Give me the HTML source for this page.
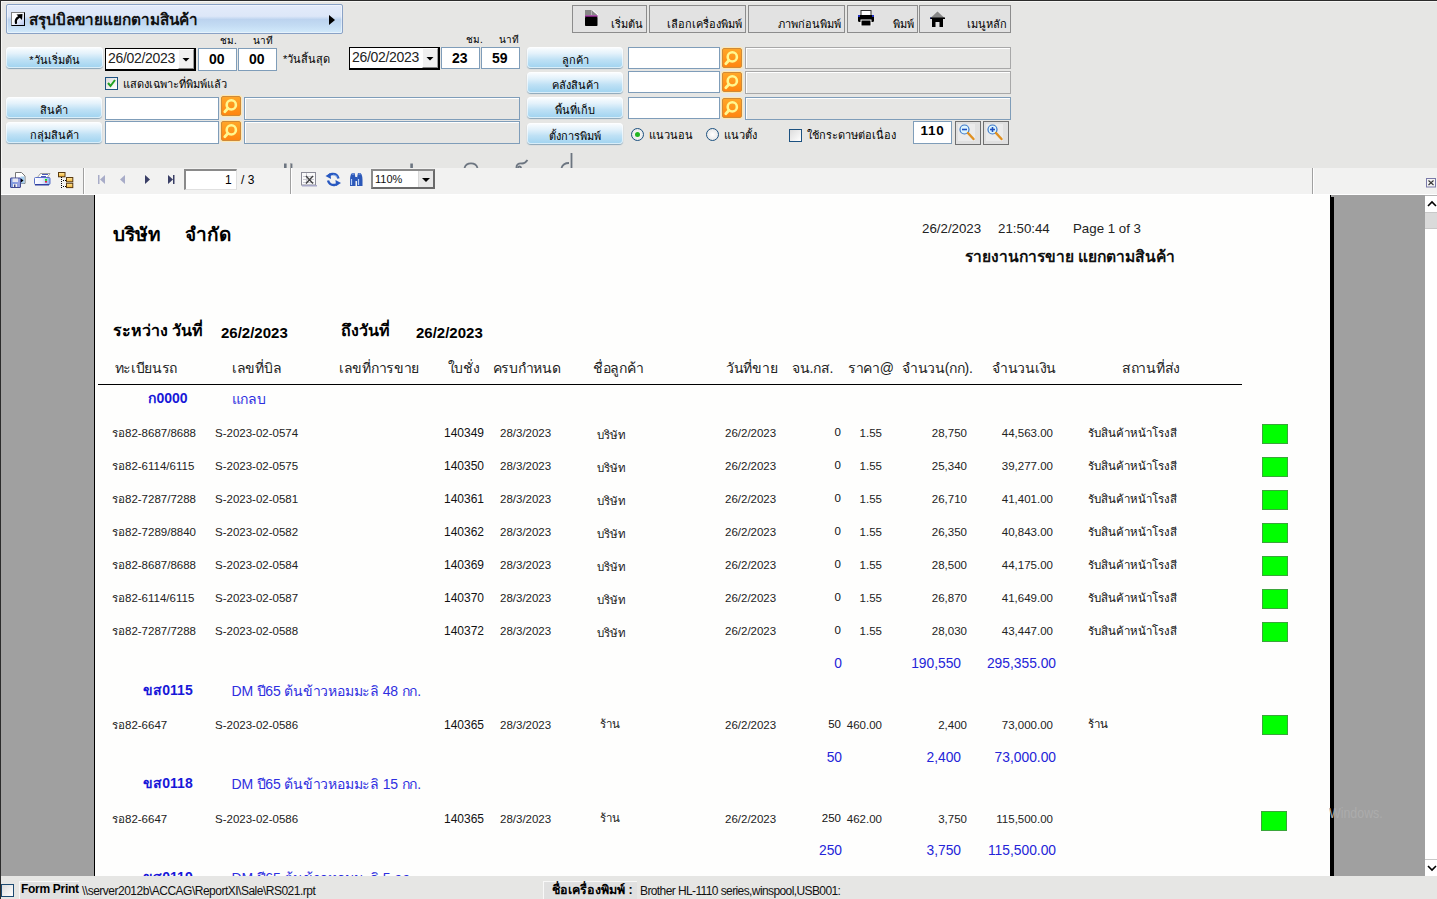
<!DOCTYPE html><html><head><meta charset="utf-8"><style>
*{margin:0;padding:0;box-sizing:border-box}
html,body{width:1437px;height:899px;overflow:hidden;background:#e6e6e4;font-family:"Liberation Sans",sans-serif;color:#000}
.a{position:absolute}
.t{position:absolute;white-space:nowrap;line-height:1}
.btn{position:absolute;border-radius:4px;background:linear-gradient(#fdfeff 0%,#e4f2fb 30%,#bfe1f5 60%,#9fd3f0 100%);box-shadow:0 1px 1px #8aa6b8, inset 0 0 0 1px rgba(255,255,255,.6)}
.btn span{position:absolute;left:0;right:0;text-align:center;font-size:11px;line-height:1;white-space:nowrap}
.inp{position:absolute;background:#fff;border:1px solid #7f9db9}
.dis{position:absolute;background:#e6e6e4;border:1px solid #a8a8a8;box-shadow:inset 1px 1px 0 #fff}
.srch{position:absolute;width:20px;height:20px;border-radius:2px;border:1px solid #d08a38;box-shadow:0 0 0 1px #ffe8b0;background:linear-gradient(#ffa628,#ff8610)}
.tb{position:absolute;top:5px;height:28px;border:1px solid #8c8c8c;background:#e2e2e2}
.r{text-align:right}
.blue{color:#2424d8}
</style></head><body>
<div class="a" style="left:0;top:0;width:1437px;height:1px;background:#2b2b2b"></div>
<div class="a" style="left:0;top:0;width:1px;height:899px;background:#2b2b2b"></div>
<div class="a" style="left:1px;top:1px;width:1436px;height:1px;background:#f6f6f4"></div><div class="a" style="left:1px;top:1px;width:1px;height:167px;background:#f6f6f4"></div>
<div class="a" style="left:6px;top:4px;width:337px;height:30px;border:1px solid #8aa2c6;border-radius:2px;box-shadow:inset 0 0 0 1px rgba(255,255,255,.45);background:linear-gradient(#e3ebfa 0%,#dde7f8 40%,#bcd3ef 52%,#c3dbf3 72%,#d2eafb 100%)"></div>
<div class="a" style="left:11px;top:12px;width:14px;height:14px;border-top:1px solid #808080;border-left:1px solid #808080;border-right:1px solid #000;border-bottom:1px solid #000;background:linear-gradient(135deg,#fff 35%,#b8c8f0)"><svg width="12" height="12" style="position:absolute;left:0;top:0"><path d="M4 10 Q3 6 7 4" stroke="#000" stroke-width="2.2" fill="none" stroke-linecap="round"/><path d="M4.5 1.5 L10.5 1 L10 7 Z" fill="#000"/></svg></div>
<div class="t" style="left:28.5px;top:12px;font-size:15.3px;font-weight:bold;color:#111">สรุปบิลขายแยกตามสินค้า</div>
<svg class="a" style="left:329px;top:15px" width="6" height="10"><path d="M0 0 L6 5 L0 10 Z" fill="#000"/></svg>
<div class="tb" style="left:572px;width:75px"><div class="t" style="right:3px;top:13px;font-size:11px">เริ่มต้น</div></div>
<div class="tb" style="left:649px;width:97px"><div class="t" style="right:3px;top:13px;font-size:11px">เลือกเครื่องพิมพ์</div></div>
<div class="tb" style="left:748px;width:97px"><div class="t" style="right:3px;top:13px;font-size:11px">ภาพก่อนพิมพ์</div></div>
<div class="tb" style="left:847px;width:71px"><div class="t" style="right:3px;top:13px;font-size:11px">พิมพ์</div></div>
<div class="tb" style="left:919px;width:92px"><div class="t" style="right:3px;top:13px;font-size:11px">เมนูหลัก</div></div>
<svg class="a" style="left:585px;top:10px" width="14" height="16"><defs><linearGradient id="pu" x1="0" y1="0" x2="0" y2="1"><stop offset="0" stop-color="#c070c0"/><stop offset="1" stop-color="#500050"/></linearGradient></defs><rect x="0" y="0" width="6.5" height="5" fill="#888"/><path d="M7 0.5 L12.5 5 H7 Z" fill="#888"/><path d="M7.5 0 L13 5" stroke="#fff" stroke-width="1"/><rect x="0" y="5" width="12.5" height="2.2" fill="url(#pu)"/><rect x="0" y="7" width="12.5" height="9" rx="0.8" fill="#000"/></svg>
<svg class="a" style="left:858px;top:10px" width="16" height="16"><rect x="3" y="0.5" width="10" height="5" fill="#fff" stroke="#333" stroke-width="1"/><rect x="0" y="5" width="16" height="7" rx="1.5" fill="#000"/><rect x="0" y="5" width="2" height="2" fill="#2030c0"/><rect x="14" y="5" width="2" height="2" fill="#2030c0"/><rect x="3" y="10" width="10" height="6" fill="#000" stroke="#fff" stroke-width="1"/></svg>
<svg class="a" style="left:930px;top:11px" width="16" height="16"><path d="M0.5 7 L7.5 0.5 L14.5 7 Z" fill="#888"/><rect x="0" y="6.5" width="15" height="1.5" fill="#000"/><rect x="0" y="6.5" width="1" height="1" fill="#3040c0"/><path d="M2 8 H13 V16 H9.5 V11 H5.5 V16 H2 Z" fill="#000"/></svg>
<div class="btn" style="left:6px;top:47px;width:97px;height:21px"><span style="top:7.5px">*วันเริ่มต้น</span></div>
<div class="a" style="left:105px;top:48px;width:91px;height:23px;background:#fff;border-top:1px solid #000;border-left:1px solid #000;border-right:2px solid #000;border-bottom:2px solid #000"><div class="t" style="left:2px;top:1.5px;font-size:14px;letter-spacing:-0.3px;color:#222">26/02/2023</div><div class="a" style="left:72px;top:0px;width:16px;height:20px;background:#f0f0f0;border-left:1px solid #fff;border-top:1px solid #fff;border-right:1px solid #a0a0a0;border-bottom:1px solid #808080"><svg width="16" height="18" style="position:absolute;left:-1px;top:-1px"><path d="M4.5 9 H11.5 L8 12.5 Z" fill="#000"/></svg></div></div>
<div class="inp" style="left:198px;top:48px;width:39px;height:23px"></div><div class="t" style="left:209px;top:51.5px;font-size:14px;font-weight:bold">00</div>
<div class="inp" style="left:238px;top:48px;width:39px;height:23px"></div><div class="t" style="left:249px;top:51.5px;font-size:14px;font-weight:bold">00</div>
<div class="t" style="left:220px;top:36px;font-size:10px">ชม.</div>
<div class="t" style="left:253px;top:36px;font-size:10px">นาที</div>
<div class="t" style="left:283px;top:54px;font-size:11px">*วันสิ้นสุด</div>
<div class="a" style="left:349px;top:47px;width:91px;height:23px;background:#fff;border-top:1px solid #000;border-left:1px solid #000;border-right:2px solid #000;border-bottom:2px solid #000"><div class="t" style="left:2px;top:1.5px;font-size:14px;letter-spacing:-0.3px;color:#222">26/02/2023</div><div class="a" style="left:72px;top:0px;width:16px;height:20px;background:#f0f0f0;border-left:1px solid #fff;border-top:1px solid #fff;border-right:1px solid #a0a0a0;border-bottom:1px solid #808080"><svg width="16" height="18" style="position:absolute;left:-1px;top:-1px"><path d="M4.5 9 H11.5 L8 12.5 Z" fill="#000"/></svg></div></div>
<div class="inp" style="left:441px;top:47px;width:39px;height:22px"></div><div class="t" style="left:452px;top:50.5px;font-size:14px;font-weight:bold">23</div>
<div class="inp" style="left:481px;top:47px;width:39px;height:22px"></div><div class="t" style="left:492px;top:50.5px;font-size:14px;font-weight:bold">59</div>
<div class="t" style="left:466px;top:35px;font-size:10px">ชม.</div>
<div class="t" style="left:499px;top:34.5px;font-size:10px">นาที</div>
<div class="a" style="left:105px;top:77px;width:13px;height:13px;border:1px solid #1c5180;background:linear-gradient(135deg,#dcdcdc,#fff)"><svg width="11" height="11" style="position:absolute;left:0;top:0"><path d="M2 5 L4.5 8 L9 2" stroke="#21a121" stroke-width="2" fill="none"/></svg></div>
<div class="t" style="left:123px;top:79px;font-size:11px">แสดงเฉพาะที่พิมพ์แล้ว</div>
<div class="btn" style="left:6px;top:97px;width:96px;height:21px"><span style="top:7.5px">สินค้า</span></div>
<div class="btn" style="left:6px;top:122px;width:96px;height:21px"><span style="top:7.5px">กลุ่มสินค้า</span></div>
<div class="inp" style="left:105px;top:97px;width:114px;height:23px"></div>
<div class="srch" style="left:221px;top:96px"><svg width="20" height="20" style="position:absolute;left:-1px;top:-1px"><circle cx="10.3" cy="8.9" r="4.6" stroke="#fff890" stroke-width="2.6" fill="none"/><path d="M7 12.3 L3.8 15.8" stroke="#fff890" stroke-width="2.8" stroke-linecap="round"/></svg></div>
<div class="dis" style="left:244px;top:97px;width:276px;height:23px;border-color:#7f9db9"></div>
<div class="inp" style="left:105px;top:121px;width:114px;height:23px"></div>
<div class="srch" style="left:221px;top:121px"><svg width="20" height="20" style="position:absolute;left:-1px;top:-1px"><circle cx="10.3" cy="8.9" r="4.6" stroke="#fff890" stroke-width="2.6" fill="none"/><path d="M7 12.3 L3.8 15.8" stroke="#fff890" stroke-width="2.8" stroke-linecap="round"/></svg></div>
<div class="dis" style="left:244px;top:121px;width:276px;height:23px;border-color:#7f9db9"></div>
<div class="btn" style="left:527px;top:47px;width:96px;height:21px"><span style="top:7.5px">ลูกค้า</span></div>
<div class="btn" style="left:527px;top:72px;width:96px;height:21px"><span style="top:7.5px">คลังสินค้า</span></div>
<div class="btn" style="left:527px;top:97px;width:96px;height:21px"><span style="top:7.5px">พื้นที่เก็บ</span></div>
<div class="btn" style="left:527px;top:123px;width:96px;height:21px"><span style="top:7.5px">ตั้งการพิมพ์</span></div>
<div class="inp" style="left:628px;top:47px;width:92px;height:22px"></div>
<div class="srch" style="left:722px;top:48px"><svg width="20" height="20" style="position:absolute;left:-1px;top:-1px"><circle cx="10.3" cy="8.9" r="4.6" stroke="#fff890" stroke-width="2.6" fill="none"/><path d="M7 12.3 L3.8 15.8" stroke="#fff890" stroke-width="2.8" stroke-linecap="round"/></svg></div>
<div class="inp" style="left:628px;top:71px;width:92px;height:22px"></div>
<div class="srch" style="left:722px;top:72px"><svg width="20" height="20" style="position:absolute;left:-1px;top:-1px"><circle cx="10.3" cy="8.9" r="4.6" stroke="#fff890" stroke-width="2.6" fill="none"/><path d="M7 12.3 L3.8 15.8" stroke="#fff890" stroke-width="2.8" stroke-linecap="round"/></svg></div>
<div class="inp" style="left:628px;top:97px;width:92px;height:22px"></div>
<div class="srch" style="left:722px;top:98px"><svg width="20" height="20" style="position:absolute;left:-1px;top:-1px"><circle cx="10.3" cy="8.9" r="4.6" stroke="#fff890" stroke-width="2.6" fill="none"/><path d="M7 12.3 L3.8 15.8" stroke="#fff890" stroke-width="2.8" stroke-linecap="round"/></svg></div>
<div class="dis" style="left:745px;top:47px;width:266px;height:22px"></div>
<div class="dis" style="left:745px;top:71px;width:266px;height:23px"></div>
<div class="dis" style="left:745px;top:97px;width:266px;height:23px;border-color:#7f9db9"></div>
<div class="a" style="left:631px;top:128px;width:13px;height:13px;border-radius:50%;border:1px solid #1c5180;background:radial-gradient(#fff,#e0e0e0)"><div class="a" style="left:3px;top:3px;width:5px;height:5px;border-radius:50%;background:#21b521"></div></div>
<div class="t" style="left:649px;top:130px;font-size:11px">แนวนอน</div>
<div class="a" style="left:706px;top:128px;width:13px;height:13px;border-radius:50%;border:1px solid #1c5180;background:radial-gradient(#fff,#e0e0e0)"></div>
<div class="t" style="left:724px;top:130px;font-size:11px">แนวตั้ง</div>
<div class="a" style="left:789px;top:129px;width:13px;height:13px;border:1px solid #1c5180;background:linear-gradient(135deg,#dcdcdc,#fff)"></div>
<div class="t" style="left:807px;top:130px;font-size:11px">ใช้กระดาษต่อเนื่อง</div>
<div class="inp" style="left:913px;top:121px;width:39px;height:23px"></div><div class="t" style="left:920.5px;top:124px;font-size:13.5px;letter-spacing:0.8px;font-weight:bold">110</div>
<div class="a" style="left:955px;top:121px;width:26px;height:24px;border:1px solid #707070;background:#e0e0e0"><svg width="24" height="22" style="position:absolute;left:0;top:0"><rect x="2" y="2" width="17" height="17" fill="#ebebeb"/><circle cx="8.5" cy="7.5" r="4.5" fill="#dcf4ff" stroke="#3c78c8" stroke-width="1.2"/><path d="M6 7.5 H11" stroke="#2050c0" stroke-width="1.6"/><path d="M12 11 L17.5 17" stroke="#e09020" stroke-width="2.4" stroke-linecap="round"/></svg></div>
<div class="a" style="left:983px;top:121px;width:26px;height:24px;border:1px solid #707070;background:#e0e0e0"><svg width="24" height="22" style="position:absolute;left:0;top:0"><rect x="2" y="2" width="17" height="17" fill="#ebebeb"/><circle cx="8.5" cy="7.5" r="4.5" fill="#dcf4ff" stroke="#3c78c8" stroke-width="1.2"/><path d="M6 7.5 H11" stroke="#2050c0" stroke-width="1.6"/><path d="M8.5 5 V10" stroke="#2050c0" stroke-width="1.6"/><path d="M12 11 L17.5 17" stroke="#e09020" stroke-width="2.4" stroke-linecap="round"/></svg></div>
<svg class="a" style="left:270px;top:150px" width="320" height="18"><g fill="#6c7580"><rect x="14" y="13.5" width="2.6" height="4.5"/><rect x="20" y="13.5" width="2.4" height="4.5"/><rect x="140.3" y="13.5" width="2.6" height="4.5"/></g><g stroke="#6c7580" stroke-width="1.8" fill="none"><path d="M194.5 18 A6.7 6 0 0 1 207.5 18"/><path d="M246.5 18 Q246 13 252 13.5 Q255 13.5 257.5 10"/><path d="M248 18 a1.5 1.5 0 0 1 3 0"/><path d="M291.5 18 Q293 13 299 13 M301.5 3 V18"/></g></svg>
<div class="a" style="left:1px;top:168px;width:1436px;height:27px;background:#f2f2f1"></div>
<div class="a" style="left:83px;top:168px;width:1px;height:27px;background:#a0a0a0"></div><div class="a" style="left:84px;top:168px;width:1px;height:27px;background:#fff"></div>
<div class="a" style="left:290px;top:164px;width:1px;height:31px;background:#a0a0a0"></div><div class="a" style="left:291px;top:168px;width:1px;height:27px;background:#fff"></div>
<div class="a" style="left:1312px;top:168px;width:1px;height:27px;background:#a0a0a0"></div><div class="a" style="left:1313px;top:168px;width:1px;height:27px;background:#fff"></div>
<svg class="a" style="left:0;top:166px" width="80" height="28"><defs><linearGradient id="fl" x1="0" y1="0" x2="1" y2="0"><stop offset="0" stop-color="#7c9ce0"/><stop offset="1" stop-color="#9aa0e0"/></linearGradient><linearGradient id="pb" x1="0" y1="0" x2="1" y2="0"><stop offset="0" stop-color="#ffffff"/><stop offset="0.5" stop-color="#e8ecff"/><stop offset="1" stop-color="#8ab0f0"/></linearGradient><linearGradient id="fd" x1="0" y1="0" x2="0" y2="1"><stop offset="0" stop-color="#ffe9a0"/><stop offset="1" stop-color="#f0b030"/></linearGradient></defs><path d="M15.5 6.5 H21.5 L25 10 V17.5 H15.5 Z" fill="#fff" stroke="#777" stroke-width="1"/><rect x="20.5" y="10.5" width="4" height="7" fill="#a8d0f0"/><path d="M21 12.5 L23.5 14.5 L21 16.5 Z" fill="#000"/><rect x="10.5" y="12" width="10" height="9.5" rx="0.5" fill="url(#fl)" stroke="#404890" stroke-width="1"/><rect x="12.5" y="12.5" width="5.5" height="3.5" fill="#e8e8f0"/><rect x="13" y="18" width="4" height="3" fill="#f0f0f0"/><rect x="14" y="18.5" width="1.5" height="2.5" fill="#404890"/><path d="M37 12 L40.5 7.5 H50 L47 12 Z" fill="#fff" stroke="#888" stroke-width="0.8"/><path d="M42 8.5 H48 M41 10.5 H46" stroke="#4a5ab8" stroke-width="1"/><rect x="34.5" y="11.5" width="15.5" height="7" rx="1" fill="url(#pb)" stroke="#5a70c8" stroke-width="1"/><rect x="35" y="18" width="14" height="1.5" fill="#3040a0"/><rect x="45" y="13" width="2" height="1.8" fill="#10e010"/><rect x="45" y="15" width="2" height="1.6" fill="#e02040"/><rect x="58.5" y="6.5" width="6.5" height="4.3" fill="url(#fd)" stroke="#5a3a10" stroke-width="1"/><rect x="66.5" y="11.5" width="6.3" height="4.3" fill="url(#fd)" stroke="#5a3a10" stroke-width="1"/><rect x="66.5" y="17.3" width="6.3" height="4.3" fill="url(#fd)" stroke="#5a3a10" stroke-width="1"/><rect x="61" y="11" width="1" height="1" fill="#000"/><rect x="61" y="13" width="1" height="1" fill="#000"/><rect x="61" y="15" width="1" height="1" fill="#000"/><rect x="61" y="17" width="1" height="1" fill="#000"/><rect x="61" y="19" width="1" height="1" fill="#000"/><rect x="61" y="21" width="1" height="1" fill="#000"/><rect x="63" y="14" width="1" height="1" fill="#000"/><rect x="65" y="14" width="1" height="1" fill="#000"/><rect x="63" y="20" width="1" height="1" fill="#000"/><rect x="65" y="20" width="1" height="1" fill="#000"/></svg>
<svg class="a" style="left:97px;top:175px" width="80" height="10"><rect x="1" y="0" width="1.5" height="9" fill="#a8acc8"/><path d="M8 0 L3 4.5 L8 9 Z" fill="#a8acc8"/><path d="M28 0 L23 4.5 L28 9 Z" fill="#a8acc8"/><path d="M48 0 L53 4.5 L48 9 Z" fill="#3a3f66"/><path d="M71 0 L76 4.5 L71 9 Z" fill="#3a3f66"/><rect x="76" y="0" width="1.5" height="9" fill="#3a3f66"/></svg>
<div class="a" style="left:184px;top:169px;width:53px;height:21px;background:#fff;border-top:2px solid #8a8a8a;border-left:2px solid #8a8a8a;border-right:1px solid #e0e0e0;border-bottom:1px solid #e0e0e0"></div>
<div class="t" style="left:225px;top:174px;font-size:12px">1</div>
<div class="t" style="left:241px;top:174px;font-size:12px">/ 3</div>
<svg class="a" style="left:301px;top:172px" width="16" height="15"><rect x="0.5" y="0.5" width="14" height="12.5" fill="#fafafa" stroke="#8c8c98"/><path d="M2 4.5 H13 M2 7.5 H13 M2 10.5 H13 M5.5 1 V13" stroke="#c8c8d0" stroke-width="1"/><path d="M5 4 L12 11.5 M12 4 L5 11.5" stroke="#404040" stroke-width="1.3"/><rect x="1" y="13" width="15" height="1.5" fill="#a8a8c8"/></svg>
<svg class="a" style="left:325px;top:172px" width="17" height="15"><path d="M13.5 6.5 Q12 1.5 7 2 Q4.5 2.3 3.5 4" stroke="#2858c0" stroke-width="2.4" fill="none"/><path d="M0.5 4 L5.5 1 L6 7 Z" fill="#2858c0"/><path d="M3 8.5 Q4.5 13.5 9.5 13 Q12 12.7 13 11" stroke="#2858c0" stroke-width="2.4" fill="none"/><path d="M16 11 L11 14 L10.5 8 Z" fill="#2858c0"/><path d="M12.5 5 Q11 3 8 3" stroke="#a8d0ff" stroke-width="0.8" fill="none"/></svg>
<svg class="a" style="left:349px;top:172px" width="15" height="15"><path d="M1 8 Q1 3 3 1 H5.5 Q6.5 4 6.5 8 V14 H1 Z" fill="#2c58b8"/><path d="M13.5 8 Q13.5 3 11.5 1 H9 Q8 4 8 8 V14 H13.5 Z" fill="#2c58b8"/><rect x="6" y="5" width="2.5" height="4" fill="#2c58b8"/><path d="M2.5 7 V13" stroke="#b8d0f8" stroke-width="1.2"/><path d="M9.5 7 V13" stroke="#b8d0f8" stroke-width="1.2"/><path d="M3 2 H5" stroke="#9ab8f0" stroke-width="1"/><path d="M9.5 2 H11.5" stroke="#9ab8f0" stroke-width="1"/></svg>
<div class="a" style="left:371px;top:169px;width:64px;height:20px;background:#fff;border-top:2px solid #8a8a8a;border-left:2px solid #8a8a8a;border-right:2px solid #6a6a6a;border-bottom:2px solid #6a6a6a"><div class="t" style="left:2px;top:3px;font-size:11px;color:#111">110%</div><div class="a" style="left:45px;top:0;width:15px;height:16px;background:#e8e8e8;border-left:1px solid #d8d8d8"><svg width="15" height="16" style="position:absolute;left:0;top:0"><path d="M3 7 H11 L7 11 Z" fill="#000"/></svg></div></div>
<svg class="a" style="left:1426px;top:178px" width="10" height="10"><rect x="0.5" y="0.5" width="9" height="8.5" fill="#f4f4f4" stroke="#7a7aa8"/><path d="M2.5 2.5 L7.5 7 M7.5 2.5 L2.5 7" stroke="#333" stroke-width="1.1"/></svg>
<div class="a" style="left:1px;top:195px;width:1424px;height:681px;background:#a0a0a0"></div>
<div class="a" style="left:94px;top:195px;width:1px;height:681px;background:#000"></div>
<div class="a" style="left:95px;top:195px;width:1235px;height:681px;background:#fefefd"></div>
<div class="a" style="left:1330px;top:195px;width:1px;height:681px;background:#000"></div><div class="a" style="left:1331px;top:197px;width:3px;height:679px;background:#000"></div>
<div class="a" style="left:1425px;top:195px;width:12px;height:681px;background:#fff;border-top:1px solid #b4b4b4"></div>
<div class="a" style="left:1px;top:194px;width:1436px;height:1px;background:#fff"></div>
<svg class="a" style="left:1427px;top:200px" width="10" height="8"><path d="M1 6 L5 2 L9 6" stroke="#000" stroke-width="1.6" fill="none"/></svg>
<div class="a" style="left:1425px;top:212px;width:12px;height:17px;background:#dadada;border-top:1px solid #c8c8c8;border-bottom:1px solid #c8c8c8"></div>
<div class="a" style="left:1425px;top:859px;width:12px;height:17px;background:#fff;border-top:1px solid #c8c8c8"></div>
<svg class="a" style="left:1427px;top:864px" width="10" height="8"><path d="M1 2 L5 6 L9 2" stroke="#000" stroke-width="1.6" fill="none"/></svg>
<div class="t" style="left:1329px;top:804.5px;font-size:15.5px;transform:scaleX(0.8);transform-origin:0 0;color:#acacac">Windows.</div>
<div class="t" style="left:113px;top:225px;font-size:19px;font-weight:bold;font-family:'Liberation Serif',serif">บริษัท</div>
<div class="t" style="left:185px;top:225px;font-size:19px;font-weight:bold;font-family:'Liberation Serif',serif">จำกัด</div>
<div class="t" style="left:922px;top:222px;font-size:13.3px;color:#222">26/2/2023</div>
<div class="t" style="left:998px;top:222px;font-size:13.3px;color:#222">21:50:44</div>
<div class="t" style="left:1073px;top:222px;font-size:13.3px;color:#222">Page 1 of 3</div>
<div class="t" style="left:965px;top:249px;font-size:15.6px;font-weight:bold;color:#111">รายงานการขาย แยกตามสินค้า</div>
<div class="t" style="left:113px;top:323px;font-size:16px;font-weight:bold">ระหว่าง วันที่</div>
<div class="t" style="left:221px;top:325px;font-size:15px;font-weight:bold">26/2/2023</div>
<div class="t" style="left:341px;top:323px;font-size:16px;font-weight:bold">ถึงวันที่</div>
<div class="t" style="left:416px;top:325px;font-size:15px;font-weight:bold">26/2/2023</div>
<div class="t" style="left:114.5px;top:361px;font-size:14px;letter-spacing:-0.3px;color:#222">ทะเบียนรถ</div>
<div class="t" style="left:232px;top:361px;font-size:14px;letter-spacing:-0.3px;color:#222">เลขที่บิล</div>
<div class="t" style="left:339px;top:361px;font-size:14px;letter-spacing:-0.3px;color:#222">เลขที่การขาย</div>
<div class="t" style="left:447.5px;top:361px;font-size:14px;letter-spacing:-0.3px;color:#222">ใบชั่ง</div>
<div class="t" style="left:492.5px;top:361px;font-size:14px;letter-spacing:-0.3px;color:#222">ครบกำหนด</div>
<div class="t" style="left:593px;top:361px;font-size:14px;letter-spacing:-0.3px;color:#222">ชื่อลูกค้า</div>
<div class="t" style="left:726px;top:361px;font-size:14px;letter-spacing:-0.3px;color:#222">วันที่ขาย</div>
<div class="t" style="left:792px;top:361px;font-size:14px;letter-spacing:-0.3px;color:#222">จน.กส.</div>
<div class="t" style="left:848px;top:361px;font-size:14px;letter-spacing:-0.3px;color:#222">ราคา@</div>
<div class="t" style="left:902px;top:361px;font-size:14px;letter-spacing:-0.3px;color:#222">จำนวน(กก).</div>
<div class="t" style="left:992px;top:361px;font-size:14px;letter-spacing:-0.3px;color:#222">จำนวนเงิน</div>
<div class="t" style="left:1122px;top:361px;font-size:14px;letter-spacing:-0.3px;color:#222">สถานที่ส่ง</div>
<div class="a" style="left:98px;top:384px;width:1144px;height:1px;background:#000"></div>
<div class="t" style="left:118px;width:100px;text-align:center;top:391px;font-size:14px;font-weight:bold;color:#1818d8">ก0000</div>
<div class="t" style="left:231.5px;top:392px;font-size:14px;letter-spacing:-0.2px;color:#2e2ee0">แกลบ</div>
<div class="t" style="left:112px;top:428px;font-size:11.5px;color:#222">รอ82-8687/8688</div>
<div class="t" style="left:215px;top:428px;font-size:11.5px;color:#222">S-2023-02-0574</div>
<div class="t r" style="left:421px;width:63px;top:427px;font-size:12px;color:#111">140349</div>
<div class="t" style="left:500px;top:428px;font-size:11.5px;color:#222">28/3/2023</div>
<div class="t" style="left:597px;top:430px;font-size:11.5px;color:#222">บริษัท</div>
<div class="t" style="left:725px;top:428px;font-size:11.5px;color:#222">26/2/2023</div>
<div class="t r" style="left:800px;width:41px;top:427px;font-size:11.5px;color:#111">0</div>
<div class="t r" style="left:840px;width:42px;top:428px;font-size:11.5px;color:#222">1.55</div>
<div class="t r" style="left:900px;width:67px;top:428px;font-size:11.5px;color:#222">28,750</div>
<div class="t r" style="left:980px;width:73px;top:428px;font-size:11.5px;color:#222">44,563.00</div>
<div class="t" style="left:1088px;top:428px;font-size:11.5px;color:#111">รับสินค้าหน้าโรงสี</div>
<div class="a" style="left:1262px;top:424px;width:26px;height:20px;background:#00ff00;border:1px solid #3aa63a"></div>
<div class="t" style="left:112px;top:461px;font-size:11.5px;color:#222">รอ82-6114/6115</div>
<div class="t" style="left:215px;top:461px;font-size:11.5px;color:#222">S-2023-02-0575</div>
<div class="t r" style="left:421px;width:63px;top:460px;font-size:12px;color:#111">140350</div>
<div class="t" style="left:500px;top:461px;font-size:11.5px;color:#222">28/3/2023</div>
<div class="t" style="left:597px;top:463px;font-size:11.5px;color:#222">บริษัท</div>
<div class="t" style="left:725px;top:461px;font-size:11.5px;color:#222">26/2/2023</div>
<div class="t r" style="left:800px;width:41px;top:460px;font-size:11.5px;color:#111">0</div>
<div class="t r" style="left:840px;width:42px;top:461px;font-size:11.5px;color:#222">1.55</div>
<div class="t r" style="left:900px;width:67px;top:461px;font-size:11.5px;color:#222">25,340</div>
<div class="t r" style="left:980px;width:73px;top:461px;font-size:11.5px;color:#222">39,277.00</div>
<div class="t" style="left:1088px;top:461px;font-size:11.5px;color:#111">รับสินค้าหน้าโรงสี</div>
<div class="a" style="left:1262px;top:457px;width:26px;height:20px;background:#00ff00;border:1px solid #3aa63a"></div>
<div class="t" style="left:112px;top:494px;font-size:11.5px;color:#222">รอ82-7287/7288</div>
<div class="t" style="left:215px;top:494px;font-size:11.5px;color:#222">S-2023-02-0581</div>
<div class="t r" style="left:421px;width:63px;top:493px;font-size:12px;color:#111">140361</div>
<div class="t" style="left:500px;top:494px;font-size:11.5px;color:#222">28/3/2023</div>
<div class="t" style="left:597px;top:496px;font-size:11.5px;color:#222">บริษัท</div>
<div class="t" style="left:725px;top:494px;font-size:11.5px;color:#222">26/2/2023</div>
<div class="t r" style="left:800px;width:41px;top:493px;font-size:11.5px;color:#111">0</div>
<div class="t r" style="left:840px;width:42px;top:494px;font-size:11.5px;color:#222">1.55</div>
<div class="t r" style="left:900px;width:67px;top:494px;font-size:11.5px;color:#222">26,710</div>
<div class="t r" style="left:980px;width:73px;top:494px;font-size:11.5px;color:#222">41,401.00</div>
<div class="t" style="left:1088px;top:494px;font-size:11.5px;color:#111">รับสินค้าหน้าโรงสี</div>
<div class="a" style="left:1262px;top:490px;width:26px;height:20px;background:#00ff00;border:1px solid #3aa63a"></div>
<div class="t" style="left:112px;top:527px;font-size:11.5px;color:#222">รอ82-7289/8840</div>
<div class="t" style="left:215px;top:527px;font-size:11.5px;color:#222">S-2023-02-0582</div>
<div class="t r" style="left:421px;width:63px;top:526px;font-size:12px;color:#111">140362</div>
<div class="t" style="left:500px;top:527px;font-size:11.5px;color:#222">28/3/2023</div>
<div class="t" style="left:597px;top:529px;font-size:11.5px;color:#222">บริษัท</div>
<div class="t" style="left:725px;top:527px;font-size:11.5px;color:#222">26/2/2023</div>
<div class="t r" style="left:800px;width:41px;top:526px;font-size:11.5px;color:#111">0</div>
<div class="t r" style="left:840px;width:42px;top:527px;font-size:11.5px;color:#222">1.55</div>
<div class="t r" style="left:900px;width:67px;top:527px;font-size:11.5px;color:#222">26,350</div>
<div class="t r" style="left:980px;width:73px;top:527px;font-size:11.5px;color:#222">40,843.00</div>
<div class="t" style="left:1088px;top:527px;font-size:11.5px;color:#111">รับสินค้าหน้าโรงสี</div>
<div class="a" style="left:1262px;top:523px;width:26px;height:20px;background:#00ff00;border:1px solid #3aa63a"></div>
<div class="t" style="left:112px;top:560px;font-size:11.5px;color:#222">รอ82-8687/8688</div>
<div class="t" style="left:215px;top:560px;font-size:11.5px;color:#222">S-2023-02-0584</div>
<div class="t r" style="left:421px;width:63px;top:559px;font-size:12px;color:#111">140369</div>
<div class="t" style="left:500px;top:560px;font-size:11.5px;color:#222">28/3/2023</div>
<div class="t" style="left:597px;top:562px;font-size:11.5px;color:#222">บริษัท</div>
<div class="t" style="left:725px;top:560px;font-size:11.5px;color:#222">26/2/2023</div>
<div class="t r" style="left:800px;width:41px;top:559px;font-size:11.5px;color:#111">0</div>
<div class="t r" style="left:840px;width:42px;top:560px;font-size:11.5px;color:#222">1.55</div>
<div class="t r" style="left:900px;width:67px;top:560px;font-size:11.5px;color:#222">28,500</div>
<div class="t r" style="left:980px;width:73px;top:560px;font-size:11.5px;color:#222">44,175.00</div>
<div class="t" style="left:1088px;top:560px;font-size:11.5px;color:#111">รับสินค้าหน้าโรงสี</div>
<div class="a" style="left:1262px;top:556px;width:26px;height:20px;background:#00ff00;border:1px solid #3aa63a"></div>
<div class="t" style="left:112px;top:593px;font-size:11.5px;color:#222">รอ82-6114/6115</div>
<div class="t" style="left:215px;top:593px;font-size:11.5px;color:#222">S-2023-02-0587</div>
<div class="t r" style="left:421px;width:63px;top:592px;font-size:12px;color:#111">140370</div>
<div class="t" style="left:500px;top:593px;font-size:11.5px;color:#222">28/3/2023</div>
<div class="t" style="left:597px;top:595px;font-size:11.5px;color:#222">บริษัท</div>
<div class="t" style="left:725px;top:593px;font-size:11.5px;color:#222">26/2/2023</div>
<div class="t r" style="left:800px;width:41px;top:592px;font-size:11.5px;color:#111">0</div>
<div class="t r" style="left:840px;width:42px;top:593px;font-size:11.5px;color:#222">1.55</div>
<div class="t r" style="left:900px;width:67px;top:593px;font-size:11.5px;color:#222">26,870</div>
<div class="t r" style="left:980px;width:73px;top:593px;font-size:11.5px;color:#222">41,649.00</div>
<div class="t" style="left:1088px;top:593px;font-size:11.5px;color:#111">รับสินค้าหน้าโรงสี</div>
<div class="a" style="left:1262px;top:589px;width:26px;height:20px;background:#00ff00;border:1px solid #3aa63a"></div>
<div class="t" style="left:112px;top:626px;font-size:11.5px;color:#222">รอ82-7287/7288</div>
<div class="t" style="left:215px;top:626px;font-size:11.5px;color:#222">S-2023-02-0588</div>
<div class="t r" style="left:421px;width:63px;top:625px;font-size:12px;color:#111">140372</div>
<div class="t" style="left:500px;top:626px;font-size:11.5px;color:#222">28/3/2023</div>
<div class="t" style="left:597px;top:628px;font-size:11.5px;color:#222">บริษัท</div>
<div class="t" style="left:725px;top:626px;font-size:11.5px;color:#222">26/2/2023</div>
<div class="t r" style="left:800px;width:41px;top:625px;font-size:11.5px;color:#111">0</div>
<div class="t r" style="left:840px;width:42px;top:626px;font-size:11.5px;color:#222">1.55</div>
<div class="t r" style="left:900px;width:67px;top:626px;font-size:11.5px;color:#222">28,030</div>
<div class="t r" style="left:980px;width:73px;top:626px;font-size:11.5px;color:#222">43,447.00</div>
<div class="t" style="left:1088px;top:626px;font-size:11.5px;color:#111">รับสินค้าหน้าโรงสี</div>
<div class="a" style="left:1262px;top:622px;width:26px;height:20px;background:#00ff00;border:1px solid #3aa63a"></div>
<div class="t r blue" style="left:790px;width:52px;top:657px;font-size:13.8px">0</div>
<div class="t r blue" style="left:880px;width:81px;top:657px;font-size:13.8px">190,550</div>
<div class="t r blue" style="left:970px;width:86px;top:657px;font-size:13.8px">295,355.00</div>
<div class="t" style="left:118px;width:100px;text-align:center;top:683px;font-size:14px;font-weight:bold;color:#1818d8">ขส0115</div>
<div class="t" style="left:231.5px;top:684px;font-size:14px;letter-spacing:-0.2px;color:#2e2ee0">DM ปี65 ต้นข้าวหอมมะลิ 48 กก.</div>
<div class="t" style="left:112px;top:720px;font-size:11.5px;color:#222">รอ82-6647</div>
<div class="t" style="left:215px;top:720px;font-size:11.5px;color:#222">S-2023-02-0586</div>
<div class="t r" style="left:421px;width:63px;top:719px;font-size:12px;color:#111">140365</div>
<div class="t" style="left:500px;top:720px;font-size:11.5px;color:#222">28/3/2023</div>
<div class="t" style="left:599.5px;top:719px;font-size:11.5px;color:#222">ร้าน</div>
<div class="t" style="left:725px;top:720px;font-size:11.5px;color:#222">26/2/2023</div>
<div class="t r" style="left:800px;width:41px;top:719px;font-size:11.5px;color:#111">50</div>
<div class="t r" style="left:840px;width:42px;top:720px;font-size:11.5px;color:#222">460.00</div>
<div class="t r" style="left:900px;width:67px;top:720px;font-size:11.5px;color:#222">2,400</div>
<div class="t r" style="left:980px;width:73px;top:720px;font-size:11.5px;color:#222">73,000.00</div>
<div class="t" style="left:1088px;top:719px;font-size:11.5px;color:#111">ร้าน</div>
<div class="a" style="left:1262px;top:715px;width:26px;height:20px;background:#00ff00;border:1px solid #3aa63a"></div>
<div class="t r blue" style="left:790px;width:52px;top:751px;font-size:13.8px">50</div>
<div class="t r blue" style="left:880px;width:81px;top:751px;font-size:13.8px">2,400</div>
<div class="t r blue" style="left:970px;width:86px;top:751px;font-size:13.8px">73,000.00</div>
<div class="t" style="left:118px;width:100px;text-align:center;top:776px;font-size:14px;font-weight:bold;color:#1818d8">ขส0118</div>
<div class="t" style="left:231.5px;top:777px;font-size:14px;letter-spacing:-0.2px;color:#2e2ee0">DM ปี65 ต้นข้าวหอมมะลิ 15 กก.</div>
<div class="t" style="left:112px;top:814px;font-size:11.5px;color:#222">รอ82-6647</div>
<div class="t" style="left:215px;top:814px;font-size:11.5px;color:#222">S-2023-02-0586</div>
<div class="t r" style="left:421px;width:63px;top:813px;font-size:12px;color:#111">140365</div>
<div class="t" style="left:500px;top:814px;font-size:11.5px;color:#222">28/3/2023</div>
<div class="t" style="left:599.5px;top:813px;font-size:11.5px;color:#222">ร้าน</div>
<div class="t" style="left:725px;top:814px;font-size:11.5px;color:#222">26/2/2023</div>
<div class="t r" style="left:800px;width:41px;top:813px;font-size:11.5px;color:#111">250</div>
<div class="t r" style="left:840px;width:42px;top:814px;font-size:11.5px;color:#222">462.00</div>
<div class="t r" style="left:900px;width:67px;top:814px;font-size:11.5px;color:#222">3,750</div>
<div class="t r" style="left:980px;width:73px;top:814px;font-size:11.5px;color:#222">115,500.00</div>
<div class="a" style="left:1261px;top:811px;width:26px;height:20px;background:#00ff00;border:1px solid #3aa63a"></div>
<div class="t r blue" style="left:790px;width:52px;top:844px;font-size:13.8px">250</div>
<div class="t r blue" style="left:880px;width:81px;top:844px;font-size:13.8px">3,750</div>
<div class="t r blue" style="left:970px;width:86px;top:844px;font-size:13.8px">115,500.00</div>
<div class="t" style="left:118px;width:100px;text-align:center;top:870px;font-size:14px;font-weight:bold;color:#1818d8">ขส0119</div>
<div class="t" style="left:231.5px;top:871px;font-size:14px;letter-spacing:-0.2px;color:#2e2ee0">DM ปี65 ต้นข้าวหอมมะลิ 5 กก.</div>
<div class="a" style="left:1px;top:876px;width:1436px;height:23px;background:#e6e6e4"></div>
<div class="a" style="left:1px;top:884px;width:13px;height:13px;border:1px solid #1c4a72;background:linear-gradient(135deg,#dcdcdc,#fff)"></div>
<div class="a" style="left:19px;top:881px;width:60px;height:18px;background:#e0e0e0;border-top:1px solid #f8f8f8;border-left:1px solid #f8f8f8"></div>
<div class="t" style="left:21px;top:883px;font-size:12px;letter-spacing:-0.3px;font-weight:bold">Form Print</div>
<div class="t" style="left:82px;top:885px;font-size:12px;letter-spacing:-0.5px;color:#111">\\server2012b\ACCAG\ReportXI\Sale\RS021.rpt</div>
<div class="a" style="left:543px;top:881px;width:94px;height:18px;background:#e0e0e0;border-top:1px solid #f8f8f8;border-left:1px solid #f8f8f8"></div>
<div class="t" style="left:552px;top:884px;font-size:12.5px;font-weight:bold">ชื่อเครื่องพิมพ์ :</div>
<div class="t" style="left:640px;top:885px;font-size:12px;letter-spacing:-0.6px;color:#111">Brother HL-1110 series,winspool,USB001:</div>
</body></html>
